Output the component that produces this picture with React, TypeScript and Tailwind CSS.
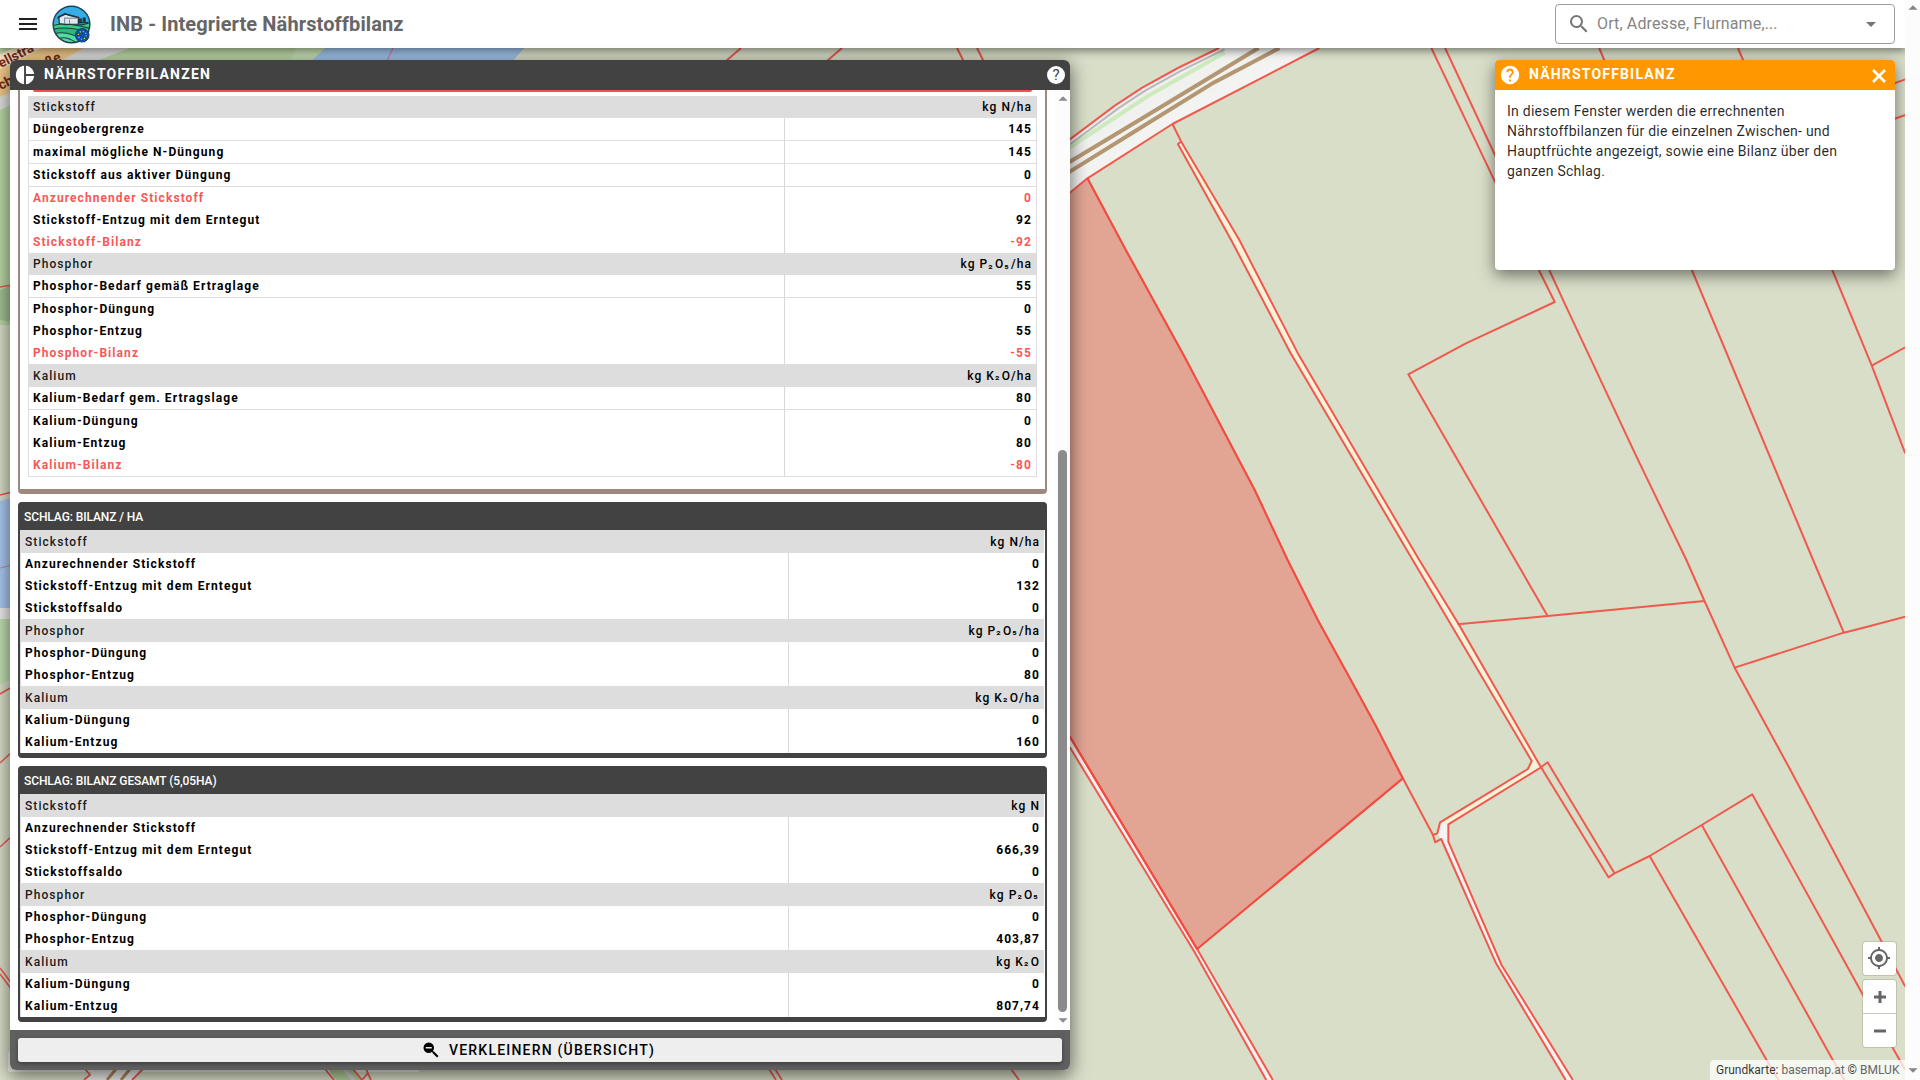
import { MdArrowDropDown, MdArrowDropUp, MdMenu, MdMyLocation, MdPieChart, MdSearch } from "react-icons/md";

type Row = {
  label: string;
  value: string;
  kind?: "head" | "red";
  tall?: boolean;
  line?: boolean;
};

const cropRows: Row[] = [
  { label: "Stickstoff", value: "kg N/ha", kind: "head" },
  { label: "Düngeobergrenze", value: "145", line: true },
  { label: "maximal mögliche N-Düngung", value: "145", line: true },
  { label: "Stickstoff aus aktiver Düngung", value: "0", line: true },
  { label: "Anzurechnender Stickstoff", value: "0", kind: "red" },
  { label: "Stickstoff-Entzug mit dem Erntegut", value: "92" },
  { label: "Stickstoff-Bilanz", value: "-92", kind: "red" },
  { label: "Phosphor", value: "kg P₂O₅/ha", kind: "head" },
  { label: "Phosphor-Bedarf gemäß Ertraglage", value: "55", line: true },
  { label: "Phosphor-Düngung", value: "0" },
  { label: "Phosphor-Entzug", value: "55" },
  { label: "Phosphor-Bilanz", value: "-55", kind: "red" },
  { label: "Kalium", value: "kg K₂O/ha", kind: "head", tall: true },
  { label: "Kalium-Bedarf gem. Ertragslage", value: "80", line: true },
  { label: "Kalium-Düngung", value: "0" },
  { label: "Kalium-Entzug", value: "80" },
  { label: "Kalium-Bilanz", value: "-80", kind: "red" },
];

function fieldRows(units: string[], nitrogen: string, phosphor: string, kalium: string): Row[] {
  return [
    { label: "Stickstoff", value: units[0], kind: "head", tall: true },
    { label: "Anzurechnender Stickstoff", value: "0" },
    { label: "Stickstoff-Entzug mit dem Erntegut", value: nitrogen },
    { label: "Stickstoffsaldo", value: "0" },
    { label: "Phosphor", value: units[1], kind: "head", tall: true },
    { label: "Phosphor-Düngung", value: "0" },
    { label: "Phosphor-Entzug", value: phosphor },
    { label: "Kalium", value: units[2], kind: "head", tall: true },
    { label: "Kalium-Düngung", value: "0" },
    { label: "Kalium-Entzug", value: kalium },
  ];
}

/* Index digits sit on the baseline and are a little wider than the font's own. */
function Unit({ text }: { text: string }) {
  return (
    <span className="whitespace-nowrap">
      {text.split(/([₂₅])/).map((part, i) =>
        part === "₂" || part === "₅" ? (
          <span key={i} className="relative -top-[1.5px] tracking-[2.2px]">
            {part}
          </span>
        ) : (
          part
        ),
      )}
    </span>
  );
}

function BalanceRow({ row, valueWidth }: { row: Row; valueWidth: string }) {
  if (row.kind === "head") {
    return (
      <div className={`flex items-center justify-between bg-[#dddddd] px-1 font-medium text-black ${row.tall ? "h-[23px]" : "h-[22px]"}`}>
        <span className="text-black/90">{row.label}</span>
        <Unit text={row.value} />
      </div>
    );
  }
  return (
    <div
      className={`flex ${row.line ? "h-[23px] border-b border-[#dddddd]" : "h-[22px]"} ${
        row.kind === "red" ? "text-[#f95858]" : "text-black"
      } font-bold`}
    >
      <span className="flex flex-1 items-center pl-1">{row.label}</span>
      <span className={`flex items-center justify-end border-l border-[#d9d9dc] pr-1 ${valueWidth}`}>{row.value}</span>
    </div>
  );
}

function FieldCard({ title, rows }: { title: string; rows: Row[] }) {
  return (
    <section className="mt-2 rounded border-x-2 border-b-[5px] border-[#424242] bg-[#424242]">
      <h2 className="flex h-7 items-center pl-1 pt-0.5 text-[12px] font-medium tracking-[-0.09px] text-white">{title}</h2>
      <div className="border-l border-r border-l-[#dddddd] border-r-white bg-white">
        {rows.map((row, i) => (
          <BalanceRow key={i} row={row} valueWidth="w-[256px]" />
        ))}
      </div>
    </section>
  );
}

function Logo() {
  return (
    <svg viewBox="0 0 40 40" className="ml-3 size-[39px]">
      <clipPath id="logo-clip">
        <circle cx="20" cy="20" r="18.5" />
      </clipPath>
      <g clipPath="url(#logo-clip)">
        <rect width="40" height="40" fill="#35aee6" />
        <path d="M0 20 Q12 16 20 19 T40 17 V40 H0Z" fill="#35cf86" />
        <path d="M0 25 Q14 21 40 28 V40 H0Z" fill="#2fb67a" />
        <path d="M0 30 Q14 25 34 37 V40 H0Z" fill="#54dba0" />
        <g fill="none" stroke="#1d3b47" strokeWidth="1.1">
          <path d="M1 21 Q12 18 20 20 T39 18 M1 25 Q14 21 40 28 M2 30 Q14 25 34 37 M6 35 Q14 31 25 39 M19 20 Q28 21 39 24" />
        </g>
        <path d="M7 12 L14 9.5 L27 13 V19.5 L14 20 L7.500 19Z" fill="#dfe8ee" stroke="#25353f" strokeWidth="1.3" />
        <path d="M5.500 13.500 L13 9 L28 13" fill="none" stroke="#25353f" strokeWidth="1.500" />
        <path d="M13 13 V19.500 M13 13.500 H26 M18 15 V19.5" stroke="#6b808d" strokeWidth="1" />
        <path d="M28 19 V14.500 H30 V18 H32 V13.500 H34 V18 H37" fill="#25353f" stroke="#25353f" strokeWidth="1.2" />
      </g>
      <circle cx="20" cy="20" r="18.8" fill="none" stroke="#1b4256" strokeWidth="1.5" />
      <circle cx="31" cy="31" r="7" fill="#0b50a8" stroke="#153f73" strokeWidth="1" />
      <circle cx="31" cy="31" r="4" fill="none" stroke="#e8cf3a" strokeWidth="1.2" strokeDasharray="1.1 2.04" />
    </svg>
  );
}

/* Parcel borders, in a grid of 0.5485 x 0.3333 px units that starts at (1060, 40). */
const parcels = [
  "M677 24L793 425L873 690L902 786L740 910L635 1003L830 1560L889 1728",
  "M702 24L793 345L892 690L920 790L1051 1250L1142 1560L1175 1683L1230 1883L1330 2185L1498 2705L1541 2840",
  "M725 1753L889 1728L1175 1683",
  "M983 24L1152 690L1373 1560L1429 1778",
  "M1230 1883L1429 1778L1465 1763L1541 1730",
  "M1236 24L1408 690L1480 977L1541 1240M1480 977L1541 922",
  "M1500 142L1541 118M1500 249L1541 225",
  "M877 2182L1000 2512L1011 2500L1075 2448L1170 2355L1262 2263L1465 2868L1541 3090",
  "M877 2182L889 2167L1011 2500",
  "M1075 2448L1290 3065L1310 3120M1170 2355L1410 3063L1430 3120",
  "M205 252L221 305L215 312L312 600L420 938L643 1560L860 2163L853 2187L693 2347L688 2380L680 2385L684 2407L695 2397L795 2770L922 3120",
  "M221 305L327 600L433 938L655 1560L727 1753L877 2182L708 2353L708 2405L805 2775L935 3120",
  "M625 2215L680 2385",
  "M18 2090L250 2727L388 3120M18 2122L245 2735L376 3120",
  "M0 318L18 298L100 197L150 143L215 84L290 24",
  "M0 484L18 458L50 415L205 252L473 24",
];

function MapCanvas() {
  return (
    <svg className="absolute left-0 top-0" width="1905" height="1080" viewBox="0 0 1905 1080">
      <defs>
        <linearGradient id="rail" x1="0" y1="0" x2="1" y2="1">
          <stop offset="0" stopColor="#e8e8e8" />
          <stop offset="0.5" stopColor="#f4f4f2" />
          <stop offset="0.7" stopColor="#dedede" />
          <stop offset="1" stopColor="#e6e6e6" />
        </linearGradient>
      </defs>
      <rect width="1905" height="1080" fill="#d8dec8" />

      {/* town side */}
      <path d="M0 48H330L0 325Z" fill="#bcd8a6" />
      <path d="M0 110V325H12V110Z" fill="#b9d8a5" />
      <path d="M0 290L12 285V322L0 320Z" fill="#a3c195" />
      <path d="M0 110V70L60 48H130L60 75L10 105Z" fill="#dfdfdd" />
      <path d="M325 48H524L512 62H310Z" fill="#9fc3ea" />
      <path d="M296 48H325L310 62H290Z" fill="#c6dfb4" />
      <path d="M0 501L12 498V608H0Z" fill="#a9c9f0" />
      <path d="M0 608H12V619H0Z" fill="#eeeceb" />
      <path d="M0 619H12V680L0 684Z" fill="#c0deb0" />
      <path d="M-4 71L42 47H86L-4 96Z" fill="#f1c989" />
      <path d="M-4 84L14 75V90L-4 99Z" fill="#f1c989" />
      <path d="M14 48H42L-4 71V56Z" fill="#f6e2c0" />
      <g fill="#76281a" fontFamily="Roboto, sans-serif" fontSize="13.5" fontWeight="700">
        <text transform="translate(1 68) rotate(-27)">ellstra</text>
        <text transform="translate(48 67) rotate(-27)">ße</text>
        <text transform="translate(1 90) rotate(-27)">ch</text>
      </g>
      <path d="M0 287L12 285M0 495L12 492M0 694L12 687M0 763L12 752M0 847L12 836M0 968L12 984M0 974L12 990" stroke="#ee5850" strokeWidth="1.600" />
      <path d="M0 568L12 565M393 48L387 61" stroke="#c77fa8" strokeWidth="1.200" />
      <path d="M741 48L726 61M842 48L827 61M957 48L964 62M977 48L984 62" stroke="#ee5850" strokeWidth="2" />

      {/* strip below the panel */}
      <rect x="8" y="1051" width="412" height="21" rx="3" fill="#f2f2ee" />
      <path d="M84 1080L95 1069H142L132 1080Z" fill="#eeeeec" />
      <path d="M107 1080L116 1069M121 1080L130 1069" stroke="#ac8a5e" strokeWidth="3" />
      <path d="M328 1069H352L362 1080H336Z" fill="#b2cf98" />
      <path d="M344 1069L354 1080" stroke="#cfcfd3" strokeWidth="4" />
      <path d="M84 1080L90 1075L85 1069M132 1080L143 1069M325 1069L334 1080M353 1069L362 1080L368 1073M366 1069L371 1080M769 1069L776 1080M775 1069L782 1080M1011 1069L1019 1080" fill="none" stroke="#ee5850" strokeWidth="1.800" />

      <g transform="translate(1060 40) scale(0.5485 0.33333)">
        <path d="M0 318L18 298L100 197L150 143L215 84L290 24H473L205 252L50 415L0 484Z" fill="url(#rail)" />
        <path d="M0 345L18 322L160 168L300 38" fill="none" stroke="#cdeabd" strokeWidth="4" vectorEffect="non-scaling-stroke" />
        <path d="M0 330L24 306L106 205L156 151L221 92L300 28" fill="none" stroke="#bab7bb" strokeWidth="2" vectorEffect="non-scaling-stroke" />
        <path d="M0 385L18 365L150 235L362 24M0 415L18 395L155 255L280 128L400 24" fill="none" stroke="#b39672" strokeWidth="4" vectorEffect="non-scaling-stroke" />
        <path d="M50 415L120 630L227 950L355 1350L415 1560L470 1740L527 1910L575 2055L625 2215L250 2727L18 2090L0 2040V484Z" fill="#e2a594" />
        <path d="M221 305L327 600L433 938L655 1560L877 2182L708 2353L693 2347L853 2187L860 2163L643 1560L420 938L312 600L215 312Z" fill="#f7f1d8" />
        <path d="M693 2347L708 2353L708 2405L805 2775L935 3120H922L795 2770L695 2397L688 2380Z" fill="#f6f2f1" />
        <path d="M18 2090L250 2727L388 3120H376L245 2735L18 2122Z" fill="#f4f0f0" />
        <g fill="none" stroke="#f0594e" strokeWidth="2" strokeLinejoin="round">
          {parcels.map((d) => (
            <path key={d} d={d} vectorEffect="non-scaling-stroke" />
          ))}
          <path
            d="M50 415L120 630L227 950L355 1350L415 1560L470 1740L527 1910L575 2055L625 2215L250 2727L18 2090"
            stroke="#f44a40"
            strokeWidth="2.200"
            vectorEffect="non-scaling-stroke"
          />
        </g>
      </g>
    </svg>
  );
}

function BalancePanel() {
  return (
    <div className="ml-[10px] mt-3 flex h-[1010px] w-[1060px] flex-col overflow-hidden rounded-md bg-white shadow-[0_5px_18px_1px_rgba(0,0,0,0.55)]">
      <header className="flex h-[30px] shrink-0 items-center bg-[#424242] pl-1 pr-[5px] text-white">
        <MdPieChart className="size-[22px]" />
        <h1 className="ml-[8px] flex-1 pb-0.5 text-[14px] font-bold tracking-[1.2px]">NÄHRSTOFFBILANZEN</h1>
        <span className="flex size-[18px] items-center justify-center rounded-full bg-white text-[15px] font-normal leading-none text-[#424242]">?</span>
      </header>

      <div className="flex h-[940px] shrink-0 text-[12px] tracking-[1.07px]">
        <div className="ml-2 w-[1029px]">
          <section className="h-[404px] rounded-b border-x-2 border-b-[5px] border-[#a1887f] px-2">
            <div className="mx-[5px] h-[2px] rounded-b bg-[#ef5350]" />
            <div className="mt-1 border-x border-b border-[#dddddd]">
              {cropRows.map((row, i) => (
                <BalanceRow key={i} row={row} valueWidth="w-[252px]" />
              ))}
            </div>
          </section>
          <FieldCard title="SCHLAG: BILANZ / HA" rows={fieldRows(["kg N/ha", "kg P₂O₅/ha", "kg K₂O/ha"], "132", "80", "160")} />
          <FieldCard title="SCHLAG: BILANZ GESAMT (5,05HA)" rows={fieldRows(["kg N", "kg P₂O₅", "kg K₂O"], "666,39", "403,87", "807,74")} />
        </div>
        <div className="ml-2 flex w-[15px] flex-col items-center bg-[#fcfcfc] text-[#8b8b8b]">
          <MdArrowDropUp className="-mb-1 -mt-0.5 size-[22px] shrink-0" />
          <div className="mt-[344px] h-[562px] w-[9px] shrink-0 rounded-full bg-[#8b8b8b]" />
          <MdArrowDropDown className="-mt-[3px] size-[22px] shrink-0" />
        </div>
      </div>

      <footer className="h-10 shrink-0 bg-[#5f5f5f] p-2">
        <button className="flex h-6 w-[1044px] items-center justify-center rounded-[3px] bg-[#eeeeee] pr-[3px] text-[14px] font-medium tracking-[1.2px] text-black shadow-[0_2px_4px_rgba(0,0,0,0.35)]">
          <svg viewBox="0 0 24 24" className="mr-[9px] size-[18px]" fill="currentColor">
            <path d="M9,2A7,7 0 0,1 16,9C16,10.57 15.5,12 14.61,13.19L15.41,14H16L22,20L20,22L14,16V15.41L13.19,14.61C12,15.5 10.57,16 9,16A7,7 0 0,1 2,9A7,7 0 0,1 9,2M5,8V10H13V8H5Z" />
          </svg>
          VERKLEINERN (ÜBERSICHT)
        </button>
      </footer>
    </div>
  );
}

function HelpPanel() {
  return (
    <div className="mr-[10px] mt-3 h-[210px] w-[400px] overflow-hidden rounded bg-white shadow-[0_5px_16px_rgba(0,0,0,0.5)]">
      <header className="flex h-[30px] items-center bg-[#ff9800] pl-1 pr-2 text-white">
        <svg viewBox="0 0 24 24" className="size-[22px]" fill="currentColor">
          <path d="M15.07,11.25L14.17,12.17C13.45,12.89 13,13.5 13,15H11V14.5C11,13.39 11.45,12.39 12.17,11.67L13.41,10.41C13.78,10.05 14,9.55 14,9C14,7.89 13.1,7 12,7A2,2 0 0,0 10,9H8A4,4 0 0,1 12,5A4,4 0 0,1 16,9C16,9.88 15.64,10.67 15.07,11.25M13,19H11V17H13M12,2A10,10 0 0,0 2,12A10,10 0 0,0 12,22A10,10 0 0,0 22,12C22,6.47 17.5,2 12,2Z" />
        </svg>
        <h2 className="ml-2 flex-1 pb-0.5 text-[14px] font-bold tracking-[1.18px]">NÄHRSTOFFBILANZ</h2>
        <svg viewBox="0 0 16 16" className="mt-[2px] size-4">
          <path d="M2 2L14 14M14 2L2 14" stroke="currentColor" strokeWidth="2.7" />
        </svg>
      </header>
      <p className="px-3 pt-[11px] text-[14px] leading-5 tracking-[0.25px] text-black/85">
        In diesem Fenster werden die errechnenten
        <br />
        Nährstoffbilanzen für die einzelnen Zwischen- und
        <br />
        Hauptfrüchte angezeigt, sowie eine Bilanz über den
        <br />
        ganzen Schlag.
      </p>
    </div>
  );
}

function MapControls() {
  return (
    <div className="flex flex-col items-end text-[#666666]">
      <div className="mr-[9px] flex size-[33px] items-center justify-center rounded-[3px] bg-white shadow-[0_0_0_1px_rgba(120,120,100,0.25)]">
        <MdMyLocation className="mb-px mr-px size-6" />
      </div>
      <div className="mb-[13px] mr-[9px] mt-[5px] flex w-[33px] flex-col gap-px rounded-[3px] bg-[#c9cdbb] shadow-[0_0_0_1px_rgba(120,120,100,0.25)]">
        <div className="flex h-[33px] items-center justify-center rounded-t-[3px] bg-white">
          <svg width="12" height="12">
            <path d="M6 0V12M0 6H12" stroke="currentColor" strokeWidth="3" />
          </svg>
        </div>
        <div className="flex h-[33px] items-center justify-center rounded-b-[3px] bg-white">
          <svg width="12" height="12">
            <path d="M0 6H12" stroke="currentColor" strokeWidth="3" />
          </svg>
        </div>
      </div>
      <div className="flex h-5 w-[195px] items-center rounded-tl bg-white/75 pl-1.5 text-[12px] text-[#666666]">
        <span className="whitespace-nowrap">
          <span className="text-black/80">Grundkarte:</span> basemap.at <span className="text-black/80">©</span> BMLUK
        </span>
      </div>
    </div>
  );
}

export default function App() {
  return (
    <div className="flex h-[1080px] w-[1920px] overflow-hidden bg-[#fcfcfc] font-['Roboto',sans-serif]">
      <div className="relative flex w-[1905px] flex-col overflow-hidden">
        <MapCanvas />
        <header className="relative flex h-12 shrink-0 items-center bg-white shadow-[0_2px_8px_1px_rgba(0,0,0,0.45)]">
          <MdMenu className="ml-4 size-6 text-[#212121]" />
          <Logo />
          <span className="ml-[19px] flex-1 text-[20px] font-bold tracking-[0.11px] text-[#666666]">INB - Integrierte Nährstoffbilanz</span>
          <div className="mr-[10px] flex h-10 w-[340px] items-center rounded border border-[#9c9c9c] text-[#757575]">
            <MdSearch className="ml-[11px] size-6" />
            <span className="ml-1.5 flex-1 text-[16px] tracking-[0.13px] text-[#858585]">Ort, Adresse, Flurname,...</span>
            <MdArrowDropDown className="mr-[11px] size-6" />
          </div>
        </header>
        <main className="relative flex flex-1 justify-between">
          <BalancePanel />
          <div className="flex flex-col items-end justify-between">
            <HelpPanel />
            <MapControls />
          </div>
        </main>
      </div>
      <div className="flex w-[15px] flex-col items-center justify-between text-[#858585]">
        <MdArrowDropUp className="-mt-[3px] size-[22px]" />
        <MdArrowDropDown className="-mb-[1px] size-[22px]" />
      </div>
    </div>
  );
}
